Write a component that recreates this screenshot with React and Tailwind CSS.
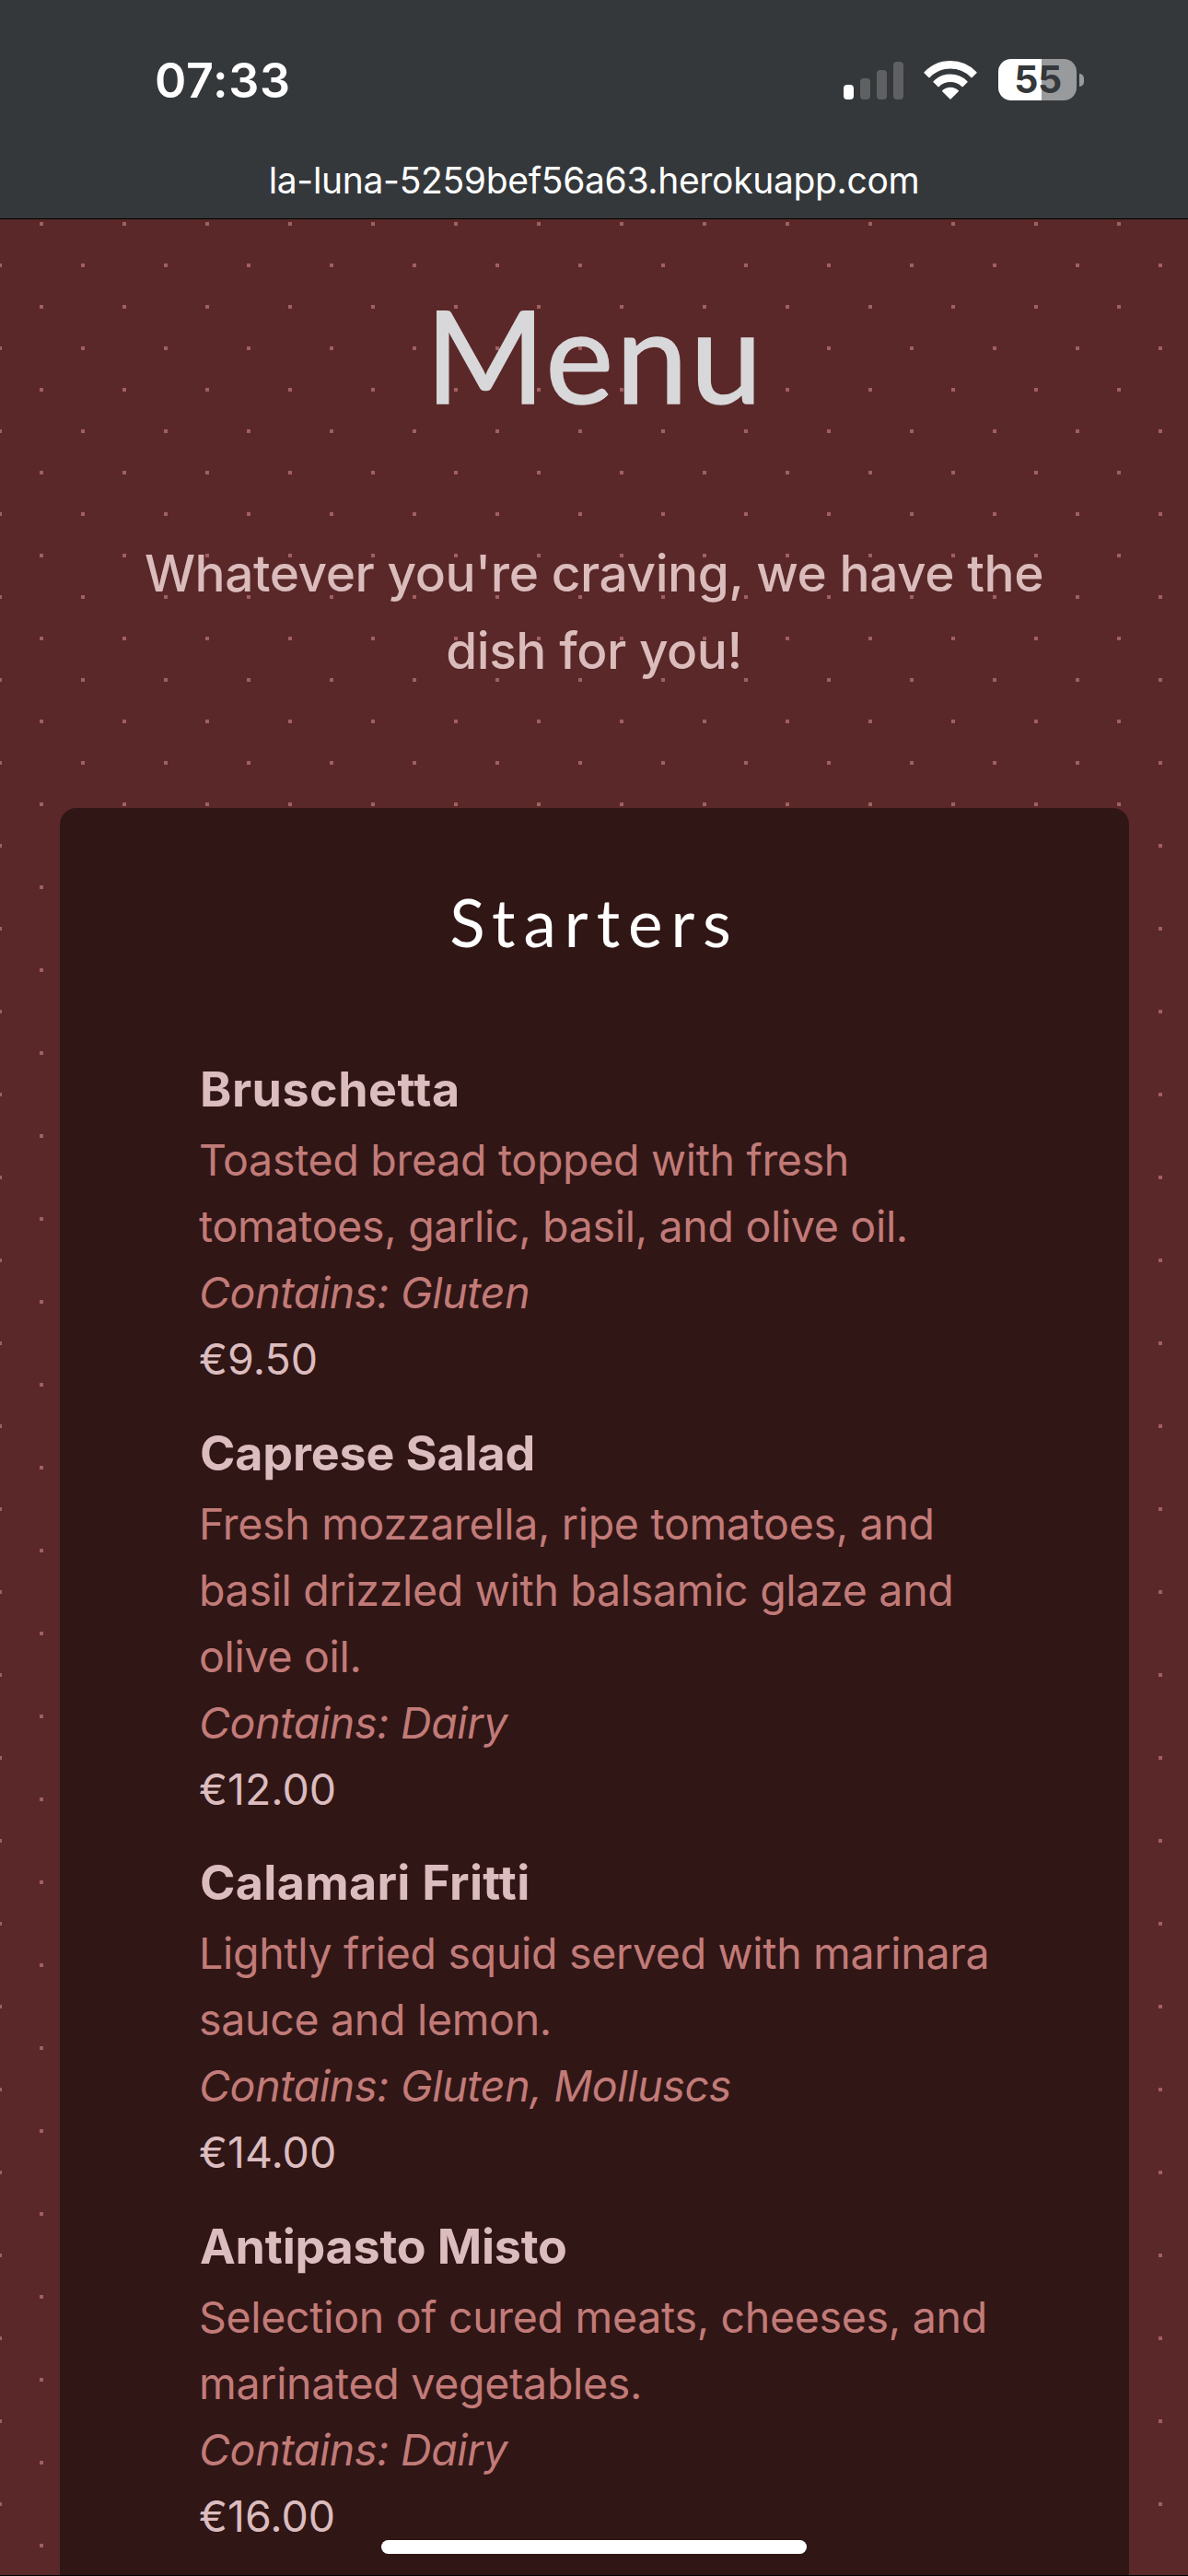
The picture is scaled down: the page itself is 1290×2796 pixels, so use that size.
import React from "react";

const ITEMS = [
  {
    name: "Bruschetta",
    tracking: "tracking-[0.5px]",
    description: "Toasted bread topped with fresh tomatoes, garlic, basil, and olive oil.",
    allergens: "Gluten",
    price: "€9.50",
  },
  {
    name: "Caprese Salad",
    tracking: "tracking-[-0.15px]",
    description: "Fresh mozzarella, ripe tomatoes, and basil drizzled with balsamic glaze and olive oil.",
    allergens: "Dairy",
    price: "€12.00",
  },
  {
    name: "Calamari Fritti",
    tracking: "tracking-[0.3px]",
    description: "Lightly fried squid served with marinara sauce and lemon.",
    allergens: "Gluten, Molluscs",
    price: "€14.00",
  },
  {
    name: "Antipasto Misto",
    tracking: "tracking-[-0.2px]",
    description: "Selection of cured meats, cheeses, and marinated vegetables.",
    allergens: "Dairy",
    price: "€16.00",
  },
];

function Signal() {
  return (
    <div className="flex h-[41px] items-end gap-[7px]">
      <span className="h-4 w-[11px] rounded-[4px] bg-white" />
      <span className="h-[23px] w-[11px] rounded-[4px] bg-[#5f6062]" />
      <span className="h-8 w-[11px] rounded-[4px] bg-[#5f6062]" />
      <span className="h-[41px] w-[11px] rounded-[4px] bg-[#5f6062]" />
    </div>
  );
}

function Wifi() {
  return (
    <svg
      className="h-[42px] w-[58px]"
      viewBox="0 0 174 126"
      fill="#fff"
      stroke="#fff"
      strokeWidth="4"
      strokeLinejoin="round"
    >
      <path d="M3 38 A116 116 0 0 1 171 38 L156 53 A96 96 0 0 0 18 53 Z" />
      <path d="M33 68 A76 76 0 0 1 141 68 L126 83 A56 56 0 0 0 48 83 Z" />
      <path d="M62 98 A36 36 0 0 1 112 98 L87 123 Z" />
    </svg>
  );
}

function Battery() {
  return (
    <div className="flex items-center gap-[3px]">
      <div className="flex h-[45px] w-[85px] items-center justify-center rounded-[14px] bg-[linear-gradient(90deg,#fff_47px,#999a9c_47px)] pl-px text-[41px] leading-[45px] font-bold tracking-[-0.5px] text-[#34383b]">
        55
      </div>
      <span className="h-[14px] w-[5px] rounded-r-full bg-[#999a9c]" />
    </div>
  );
}

function StatusBar() {
  return (
    <header className="h-[238px] border-b border-black bg-[#34383b] pt-[58px] text-white">
      <div className="flex h-[114px] justify-between pr-[113px] pl-[168px]">
        <span className="text-[52px] leading-[60px] font-semibold tracking-[0.7px]">07:33</span>
        <div className="flex h-[57px] items-center">
          <div className="pt-px">
            <Signal />
          </div>
          <div className="ml-[22px]">
            <Wifi />
          </div>
          <div className="ml-[23px]">
            <Battery />
          </div>
        </div>
      </div>
      <p className="text-center text-[39px] leading-[48px] tracking-[-0.33px]">
        la-luna-5259bef56a63.herokuapp.com
      </p>
    </header>
  );
}

function MenuItem({ name, tracking, description, allergens, price }) {
  return (
    <li className="text-[46.5px] leading-[72px] tracking-[-0.31px] text-[#c17b78]">
      <h3 className={`mb-[8px] pl-px text-[52px] leading-[64px] font-bold text-[#dbbcbf] ${tracking}`}>{name}</h3>
      <p>{description}</p>
      <p className="tracking-[-0.35px] italic">Contains: {allergens}</p>
      <p className="tracking-[0px] text-[#dbbcbf]">{price}</p>
    </li>
  );
}

export default function App() {
  return (
    <div className="relative flex h-[2796px] w-[1290px] flex-col overflow-hidden font-[Inter,sans-serif]">
      <StatusBar />
      <main className="flex flex-1 flex-col overflow-hidden border-b border-black bg-[#5a2828] bg-[conic-gradient(at_4px_4px,transparent_75%,#a06060_0),conic-gradient(at_4px_4px,transparent_75%,#a06060_0)] bg-[length:90px_90px] bg-[position:43px_3px,88px_48px] pt-[62px]">
        <h1 className="pl-[2px] text-center font-[Lato,sans-serif] text-[140px] leading-[168px] tracking-[2.5px] text-[#d8d8da] [-webkit-text-stroke:1.5px_#d8d8da]">
          Menu
        </h1>
        <p className="mx-auto mt-[112px] w-[1032px] text-center text-[55px] leading-[84px] font-medium tracking-[-0.45px] text-[#dbbcbc]">
          Whatever you're craving, we have the dish for you!
        </p>
        <section className="mt-[129px] ml-[65px] w-[1161px] shrink-0 rounded-t-[18px] bg-[#311616] pt-[81px]">
          <h2 className="text-center font-[Lato,sans-serif] text-[71px] leading-[86px] tracking-[9px] text-white">
            Starters
          </h2>
          <ul className="mt-[107px] ml-[151px] flex w-[862px] flex-col gap-[34.67px] pb-24">
            {ITEMS.map((item) => (
              <MenuItem key={item.name} {...item} />
            ))}
          </ul>
        </section>
      </main>
      <div className="absolute bottom-6 left-[414px] h-[15px] w-[462px] rounded-full bg-white" />
    </div>
  );
}
